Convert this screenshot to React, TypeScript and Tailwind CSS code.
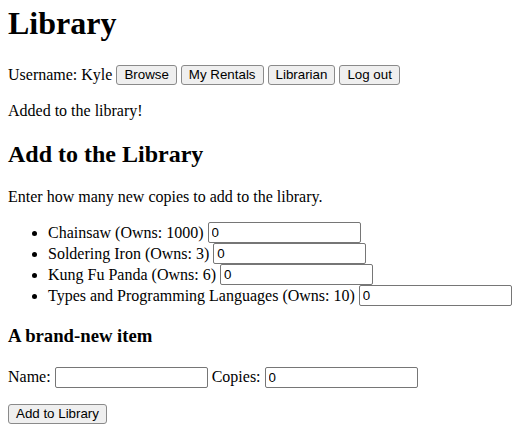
import React from 'react';

const items = [
  { name: 'Chainsaw', owns: 1000 },
  { name: 'Soldering Iron', owns: 3 },
  { name: 'Kung Fu Panda', owns: 6 },
  { name: 'Types and Programming Languages', owns: 10 },
];

function Btn({ children }: { children: React.ReactNode }) {
  return (
    <button className="h-[20px] px-[7px] rounded-[3px] border border-[#8a8a8a] bg-[#efefef] font-['Liberation_Sans',Arial,sans-serif] text-[13.33px] leading-none text-black">
      {children}
    </button>
  );
}

function Field({ value = '' }: { value?: string }) {
  return (
    <input
      defaultValue={value}
      className="w-[153px] h-[21px] px-[3px] border border-[#767676] rounded-[2px] bg-white font-['Liberation_Sans',Arial,sans-serif] text-[13.33px] text-black"
    />
  );
}

export default function App() {
  return (
    <div className="min-h-screen bg-white px-2 pt-[5px] font-['Liberation_Serif','Times_New_Roman',serif] text-black text-[16px] leading-[18px]">
      <h1 className="text-[32px] leading-[37px] font-bold">Library</h1>

      <div className="mt-[22px] flex items-center gap-[4px] h-[22px]">
        <span>Username: Kyle</span>
        <Btn>Browse</Btn>
        <Btn>My Rentals</Btn>
        <Btn>Librarian</Btn>
        <Btn>Log out</Btn>
      </div>

      <p className="mt-4">Added to the library!</p>

      <h2 className="mt-[20px] text-[24px] leading-[28px] font-bold">Add to the Library</h2>

      <p className="mt-[20px]">Enter how many new copies to add to the library.</p>

      <ul className="mt-4 pl-10 list-disc">
        {items.map((it) => (
          <li key={it.name} className="h-[21px]">
            <span className="inline-flex items-center gap-[4px]">
              {it.name} (Owns: {it.owns}) <Field value="0" />
            </span>
          </li>
        ))}
      </ul>

      <h3 className="mt-[19px] text-[18.72px] leading-[22px] font-bold">A brand-new item</h3>

      <div className="mt-[19px] flex items-center gap-[4px] h-[22px]">
        <span>Name:</span>
        <Field />
        <span>Copies:</span>
        <Field value="0" />
      </div>

      <div className="mt-4">
        <Btn>Add to Library</Btn>
      </div>
    </div>
  );
}
